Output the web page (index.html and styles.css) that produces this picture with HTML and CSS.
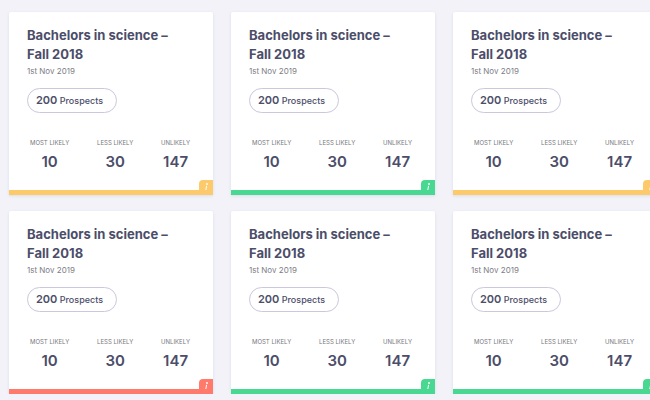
FILE: index.html
```
<!DOCTYPE html>
<html lang="en">
<head>
<meta charset="utf-8">
<meta name="viewport" content="width=device-width, initial-scale=1">
<title>Prospects</title>
<link rel="stylesheet" href="styles.css">
</head>
<body>
<main class="board" id="board"></main>
<template id="card-template">
  <article class="card">
    <h2 class="title">Bachelors in science –<br>Fall 2018</h2>
    <p class="date">1st Nov 2019</p>
    <button class="pill" type="button"><strong class="count">200</strong> Prospects</button>
    <dl class="stats">
      <div class="stat"><dt>MOST LIKELY</dt><dd>10</dd></div>
      <div class="stat"><dt>LESS LIKELY</dt><dd>30</dd></div>
      <div class="stat"><dt>UNLIKELY</dt><dd>147</dd></div>
    </dl>
    <button class="info" type="button" aria-label="Information">
      <svg viewBox="0 0 14 13" aria-hidden="true"><circle cx="8" cy="4" r="0.9"/><path d="M7.6 5.8 6.8 10"/></svg>
    </button>
  </article>
</template>
<script src="cards.js"></script>
</body>
</html>
```
FILE: cards.js
```
const statuses = ["amber", "green", "amber", "red", "green", "green"];
const board = document.getElementById("board");
const template = document.getElementById("card-template");

for (const status of statuses) {
  const card = template.content.cloneNode(true);
  card.querySelector(".card").classList.add(status);
  board.append(card);
}
```
FILE: styles.css
```
* {
  box-sizing: border-box;
  margin: 0;
}

body {
  background: #f2f2f8;
  color: #4b4d69;
  font-family: Inter, "Liberation Sans", sans-serif;
  overflow-x: hidden;
}

.board {
  display: grid;
  grid-template-columns: repeat(3, minmax(204px, 1fr));
  gap: 16px 18px;
  padding: 12px 0 0 9px;
}

.card {
  display: flex;
  flex-direction: column;
  align-items: flex-start;
  padding: 14px 18px 0;
  background: #fff;
  border-bottom: 5px solid var(--status);
  border-radius: 2px 2px 0 0;
  box-shadow: 0 1px 3px #dcdcea;
}

.amber { --status: #fcca6b; }
.green { --status: #48d891; }
.red { --status: #ff7a6b; }

.title {
  font-size: 13px;
  font-weight: 700;
  line-height: 19px;
}

.date {
  color: #7d7d86;
  font-size: 8px;
  line-height: 14px;
}

.pill {
  height: 25px;
  margin-top: 10px;
  padding: 0 13px 0 8px;
  border: 1px solid #c9c8de;
  border-radius: 13px;
  background: #fff;
  color: inherit;
  font: 500 9px/16px Inter, "Liberation Sans", sans-serif;
}

.count {
  font-size: 11px;
  font-weight: 600;
}

.stats {
  display: flex;
  align-self: stretch;
  justify-content: space-between;
  margin-top: 26px;
  padding: 0 5px 0 3px;
}

.stat {
  text-align: center;
}

dt {
  color: #77777d;
  font-size: 6px;
  line-height: 8px;
}

dd {
  margin-top: 5px;
  font-size: 15px;
  font-weight: 600;
  line-height: 20px;
}

.info {
  align-self: flex-end;
  width: 14px;
  height: 10px;
  margin: 8px -18px 0 0;
  padding: 0;
  border: 0;
  border-radius: 4px 0 0 0;
  background: var(--status);
}

.info svg {
  display: block;
  width: 14px;
  height: 13px;
  fill: #fff;
  stroke: #fff;
  stroke-width: 1;
}

.info circle {
  stroke: none;
}
```
